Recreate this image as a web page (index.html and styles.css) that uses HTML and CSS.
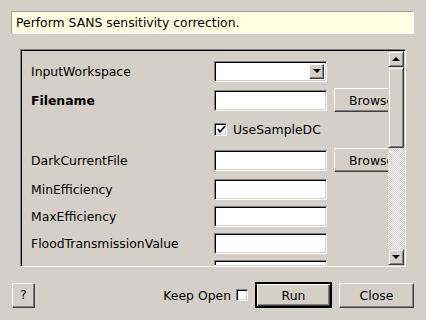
FILE: index.html
```html
<!DOCTYPE html>
<html lang="en">
<head>
    <meta charset="UTF-8">
    <title>SANSSensitivityCorrection</title>
    <link rel="stylesheet" href="styles.css">
</head>
<body>
    <div class="description">Perform SANS sensitivity correction.</div>

    <div class="frame">
        <div class="props">
            <label class="prop-label">InputWorkspace</label>
            <div class="combo">
                <span class="combo-btn"><span class="tri-down"></span></span>
            </div>
            <span></span>

            <label class="prop-label required">Filename</label>
            <input type="text" class="field">
            <button class="btn browse">Browse</button>

            <span></span>
            <label class="check-row">
                <span class="checkbox">
                    <svg width="9" height="9" viewBox="0 0 9 9"><polyline points="1,4 3,7 8,1" fill="none" stroke="#000" stroke-width="1.6"/></svg>
                </span>
                UseSampleDC
            </label>

            <label class="prop-label">DarkCurrentFile</label>
            <input type="text" class="field">
            <button class="btn browse">Browse</button>

            <label class="prop-label">MinEfficiency</label>
            <input type="text" class="field">
            <span></span>

            <label class="prop-label">MaxEfficiency</label>
            <input type="text" class="field">
            <span></span>

            <label class="prop-label">FloodTransmissionValue</label>
            <input type="text" class="field">
            <span></span>

            <span></span>
            <input type="text" class="field">
            <span></span>
        </div>

        <div class="scrollbar">
            <div class="sb-btn"><span class="tri-up"></span></div>
            <div class="sb-thumb"></div>
            <div class="sb-track"></div>
            <div class="sb-btn"><span class="tri-down"></span></div>
        </div>
    </div>

    <div class="footer">
        <button class="btn help">?</button>
        <div class="spacer"></div>
        <label class="keep-open">Keep Open <span class="checkbox"></span></label>
        <button class="btn default run">Run</button>
        <button class="btn close">Close</button>
    </div>
</body>
</html>
```

FILE: styles.css
```css
* {
    margin: 0;
    padding: 0;
    box-sizing: border-box;
}

body {
    background: #d4d0c8;
    font-family: 'DejaVu Sans', Verdana, sans-serif;
    font-size: 12.4px;
    color: #000;
    width: 426px;
    height: 320px;
    overflow: hidden;
}

.description {
    margin: 11px 12px 0 11px;
    height: 23px;
    padding: 3px 0 0 4px;
    background: #ffffe1;
    border: 1px solid;
    border-color: #a0a0a0 #ffffff #ffffff #a0a0a0;
    line-height: 16px;
}

/* sunken frame holding the property rows */
.frame {
    margin: 15px 20px 0 20px;
    height: 218px;
    display: flex;
    border: 1px solid;
    border-color: #808080 #ffffff #ffffff #808080;
    box-shadow: inset 1px 1px 0 #000, inset -1px -1px 0 #d4d0c8;
    padding: 1px;
}

.props {
    flex: 1;
    overflow: hidden;
    padding: 9px 0 0 9px;
    display: grid;
    grid-template-columns: 176px 113px 72px;
    grid-template-rows: 22px 24px 23px 26px 21px 21px 21px 21px;
    column-gap: 7px;
    row-gap: 6px;
    align-items: center;
}

.prop-label {
    white-space: nowrap;
}

.required {
    font-weight: bold;
}

.field,
.combo {
    width: 113px;
    height: 21px;
    background: #fff;
    border: 1px solid;
    border-color: #808080 #ffffff #ffffff #808080;
    box-shadow: inset 1px 1px 0 #000, inset -1px -1px 0 #d4d0c8;
    font: inherit;
    outline: none;
}

.combo {
    display: flex;
    justify-content: flex-end;
    padding: 2px;
}

.combo-btn {
    width: 15px;
    height: 15px;
    background: #d4d0c8;
    border: 1px solid;
    border-color: #ffffff #404040 #404040 #ffffff;
    box-shadow: inset -1px -1px 0 #808080;
    display: flex;
    align-items: center;
    justify-content: center;
}

.tri-down,
.tri-up {
    width: 0;
    height: 0;
    border-left: 4px solid transparent;
    border-right: 4px solid transparent;
}

.tri-down {
    border-top: 4px solid #000;
}

.tri-up {
    border-bottom: 4px solid #000;
}

.btn {
    background: #d4d0c8;
    font: inherit;
    color: #000;
    border: 1px solid;
    border-color: #ffffff #404040 #404040 #ffffff;
    box-shadow: inset -1px -1px 0 #808080;
    cursor: pointer;
}

.browse {
    width: 72px;
    height: 24px;
    text-align: left;
    padding-left: 14px;
}

.check-row {
    grid-column: 2 / span 2;
    display: flex;
    align-items: center;
    gap: 6px;
    white-space: nowrap;
}

.checkbox {
    width: 13px;
    height: 13px;
    background: #fff;
    border: 1px solid;
    border-color: #808080 #ffffff #ffffff #808080;
    box-shadow: inset 1px 1px 0 #000, inset -1px -1px 0 #d4d0c8;
    display: inline-flex;
    align-items: center;
    justify-content: center;
}

.checkbox svg {
    margin-left: 1px;
}

.scrollbar {
    width: 16px;
    display: flex;
    flex-direction: column;
}

.sb-btn,
.sb-thumb {
    background: #d4d0c8;
    border: 1px solid;
    border-color: #d4d0c8 #404040 #404040 #d4d0c8;
    box-shadow: inset 1px 1px 0 #fff, inset -1px -1px 0 #808080;
}

.sb-btn {
    height: 16px;
    display: flex;
    align-items: center;
    justify-content: center;
}

.sb-thumb {
    height: 81px;
}

.sb-track {
    flex: 1;
    background: repeating-conic-gradient(#ffffff 0 25%, #d4d0c8 0 50%) 0 0 / 2px 2px;
}

.footer {
    display: flex;
    align-items: center;
    margin: 15px 12px 0 12px;
    height: 26px;
}

.spacer {
    flex: 1;
}

.help {
    width: 23px;
    height: 25px;
    font-size: 12px;
}

.keep-open {
    display: flex;
    align-items: center;
    gap: 5px;
    margin-right: 7px;
}

.keep-open .checkbox {
    width: 12px;
    height: 12px;
}

.run {
    width: 77px;
    height: 26px;
    margin-right: 7px;
}

.default {
    outline: 1px solid #000;
    outline-offset: -1px;
    border-width: 2px;
    border-color: #000;
    box-shadow: inset 1px 1px 0 #fff, inset -1px -1px 0 #404040, inset -2px -2px 0 #808080;
}

.close {
    width: 75px;
    height: 25px;
}
```
